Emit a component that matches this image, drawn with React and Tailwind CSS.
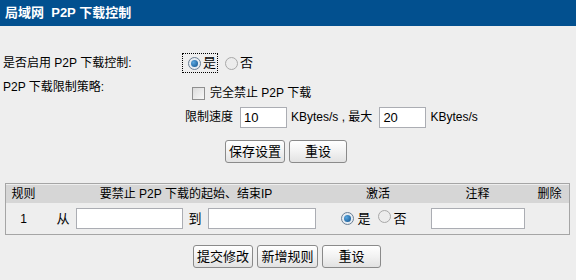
import React from 'react';

const font = { fontFamily: '"Liberation Sans", "Noto Sans CJK SC", sans-serif' };

function Radio({ checked }) {
    return (
        <span className={`inline-flex items-center justify-center w-[13px] h-[13px] rounded-full border ${checked ? 'border-[#6b7f94] bg-[#e6ecf2]' : 'border-[#a8a8a8] bg-[#ececec]'}`}>
            {checked && <span className="w-[7px] h-[7px] rounded-full bg-[radial-gradient(circle_at_35%_35%,#5aa7e0,#0d4f8a)]" />}
        </span>
    );
}

function Button({ children, w }) {
    return (
        <button type="button" className={`${w} h-[23px] rounded-[3px] border border-[#8a8a8a] bg-[linear-gradient(#ffffff,#f2f2f2_50%,#e2e2e2)] text-[13px] text-black leading-none`}>
            {children}
        </button>
    );
}

function Input({ w, value }) {
    return (
        <input readOnly value={value || ''} className={`${w} h-[21px] border border-[#abadb3] bg-white px-[3px] text-[13px] text-black outline-none`} />
    );
}

export default function App() {
    return (
        <div style={font} className="w-[576px] h-[280px] bg-[#eeeeee] text-[12px] text-black overflow-hidden">
            <div className="h-[26px] bg-[#02508f] flex items-center pl-[5px] text-white font-bold text-[13px]">
                局域网&nbsp;&nbsp;P2P 下载控制
            </div>

            <div className="grid grid-cols-[182px_1fr] mt-[26px]">
                <div className="pl-[3px] h-[22px] flex items-center">是否启用 P2P 下载控制:</div>
                <div className="h-[22px] flex items-center">
                    <span className="flex items-center gap-[2px] h-[20px] pl-[5px] pr-[1px] border border-dotted border-black">
                        <Radio checked /><span className="text-[13px]">是</span>
                    </span>
                    <span className="flex items-center gap-[2px] ml-[7px]">
                        <Radio /><span className="text-[13px]">否</span>
                    </span>
                </div>

                <div className="pl-[3px] pt-[6px] leading-[14px]">P2P 下载限制策略:</div>
                <div className="flex items-center h-[22px] mt-[8px] pl-[10px]">
                    <span className="w-[13px] h-[13px] border border-[#8f8f8f] bg-[linear-gradient(135deg,#dcdcdc,#f7f7f7)]" />
                    <span className="ml-[5px]">完全禁止 P2P 下载</span>
                </div>

                <div />
                <div className="flex items-center h-[22px] mt-[2px] pl-[3px]">
                    <span>限制速度</span>
                    <span className="ml-[7px]"><Input w="w-[47px]" value="10" /></span>
                    <span className="ml-[4px]">KBytes/s , 最大</span>
                    <span className="ml-[7px]"><Input w="w-[47px]" value="20" /></span>
                    <span className="ml-[4px]">KBytes/s</span>
                </div>
            </div>

            <div className="flex gap-[4px] mt-[12px] pl-[225px]">
                <Button w="w-[60px]">保存设置</Button>
                <Button w="w-[58px]">重设</Button>
            </div>

            <div className="mx-[5px] mt-[20px] w-[565px] border border-[#a5a5a5] pt-[1px]">
                <table className="w-full border-collapse text-[12px]">
                    <thead>
                        <tr className="bg-[#d6d6d6] h-[18px]">
                            <th className="w-[35px] font-normal text-center">规则</th>
                            <th className="w-[290px] font-normal text-center">要禁止 P2P 下载的起始、结束IP</th>
                            <th className="w-[94px] font-normal text-center">激活</th>
                            <th className="w-[105px] font-normal text-center">注释</th>
                            <th className="font-normal text-center">删除</th>
                        </tr>
                    </thead>
                    <tbody>
                        <tr className="h-[31px]">
                            <td className="text-center">1</td>
                            <td>
                                <div className="flex items-center justify-center gap-[2px]">
                                    <span className="mr-[4px] text-[13px]">从</span>
                                    <Input w="w-[107px]" />
                                    <span className="mx-[4px] text-[13px]">到</span>
                                    <Input w="w-[108px]" />
                                </div>
                            </td>
                            <td>
                                <div className="flex items-center justify-center gap-[3px] pr-[8px] text-[13px]">
                                    <Radio checked /><span>是</span>
                                    <span className="ml-[4px]"><Radio /></span><span>否</span>
                                </div>
                            </td>
                            <td className="text-center"><Input w="w-[94px]" /></td>
                            <td />
                        </tr>
                    </tbody>
                </table>
            </div>

            <div className="flex gap-[4px] mt-[10px] pl-[193px]">
                <Button w="w-[60px]">提交修改</Button>
                <Button w="w-[61px]">新增规则</Button>
                <Button w="w-[59px]">重设</Button>
            </div>
        </div>
    );
}
